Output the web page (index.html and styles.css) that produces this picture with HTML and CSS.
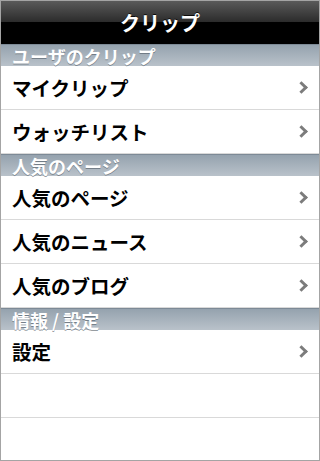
FILE: index.html
```html
<!DOCTYPE html>
<html lang="ja">

<head>
    <meta charset="UTF-8">
    <meta name="viewport" content="width=device-width, initial-scale=1.0">
    <title>クリップ</title>
    <link rel="stylesheet" href="styles.css">
</head>

<body>
    <div class="screen">
        <div class="navbar">
            <h1>クリップ</h1>
        </div>

        <div class="section">ユーザのクリップ</div>
        <div class="row"><span>マイクリップ</span><span class="chevron"></span></div>
        <div class="row"><span>ウォッチリスト</span><span class="chevron"></span></div>

        <div class="section">人気のページ</div>
        <div class="row"><span>人気のページ</span><span class="chevron"></span></div>
        <div class="row"><span>人気のニュース</span><span class="chevron"></span></div>
        <div class="row"><span>人気のブログ</span><span class="chevron"></span></div>

        <div class="section">情報 / 設定</div>
        <div class="row"><span>設定</span><span class="chevron"></span></div>
        <div class="row empty"></div>
        <div class="row empty"></div>
    </div>
</body>

</html>
```

FILE: styles.css
```css
body {
    margin: 0;
    background-color: white;
    font-family: "Noto Sans CJK JP", "Noto Sans", sans-serif;
}

.screen {
    width: 320px;
    height: 461px;
    box-sizing: border-box;
    border: 1px solid #a4a4a4;
    overflow: hidden;
    background-color: white;
}

.navbar {
    height: 43px;
    display: flex;
    justify-content: center;
    align-items: center;
    background: linear-gradient(to bottom, #5a5a5a 0%, #2c2c2c 48%, #000 50%, #000 100%);
}

.navbar h1 {
    margin: 0;
    color: white;
    font-size: 20px;
    font-weight: bold;
    line-height: 1;
    text-shadow: 0 -1px 0 rgba(0, 0, 0, 0.8);
}

.section {
    height: 21px;
    border-top: 1px solid #7d8a96;
    padding-left: 11px;
    display: flex;
    align-items: center;
    background: linear-gradient(to bottom, #95a2ae, #b9c2ca);
    color: white;
    font-size: 18px;
    font-weight: bold;
    line-height: 1;
    text-shadow: 0 1px 0 rgba(80, 90, 100, 0.6);
}

.row {
    height: 43px;
    border-bottom: 1px solid #d9d9d9;
    padding: 0 11px;
    display: flex;
    justify-content: space-between;
    align-items: center;
    color: black;
    font-size: 19.5px;
    font-weight: bold;
    line-height: 1;
}

.row.empty {
    padding: 0;
}

.chevron {
    width: 6px;
    height: 6px;
    margin-right: 2px;
    border-top: 3px solid #7c7c7c;
    border-right: 3px solid #7c7c7c;
    transform: rotate(45deg);
}
```
